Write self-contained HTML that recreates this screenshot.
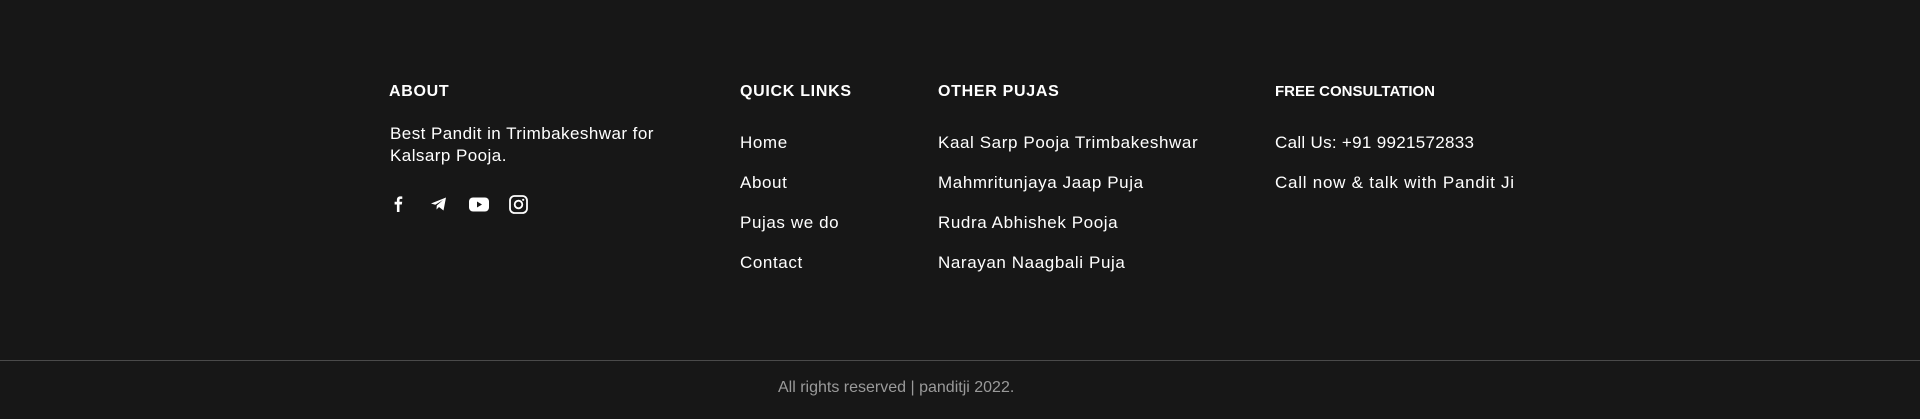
<!DOCTYPE html>
<html><head><style>
body{margin:0;width:1920px;height:419px;background:#171717;font-family:"Liberation Sans",sans-serif;color:#fff;position:relative;overflow:hidden}
.a{position:absolute;white-space:nowrap}
h{position:absolute;font-weight:bold;font-size:16px;letter-spacing:.7px}
.t{position:absolute;font-size:17px;white-space:nowrap;letter-spacing:.6px}
.line{position:absolute;left:0;top:360px;width:1920px;height:1px;background:#4a4a4a}
</style></head><body>
<h style="left:389px;top:83px">ABOUT</h>
<div class="t" style="left:390px;top:123px;line-height:22px;letter-spacing:.45px">Best Pandit in Trimbakeshwar for<br>Kalsarp Pooja.</div>
<svg class="a" style="left:389px;top:194px" width="150" height="20" viewBox="0 0 150 20" fill="#fff">
<path d="M10.5 18V10.5h2.3l.4-2.7h-2.7V6.2c0-.8.3-1.3 1.4-1.3h1.4V2.5c-.3 0-1.1-.1-2-.1-2 0-3.4 1.2-3.4 3.5v1.9H5.6v2.7h2.3V18z"/>
<path d="M42 9.5l15-6-2.5 13-4.5-3.5-2.5 2.5.3-4 6.2-5.5-7.7 4.8z"/>
<rect x="80" y="3.5" width="20" height="14" rx="4"/><path d="M88 7.5v6l5-3z" fill="#171717"/>
<rect x="121" y="2" width="17" height="17" rx="4.5" fill="none" stroke="#fff" stroke-width="1.8"/><circle cx="129.5" cy="10.5" r="3.8" fill="none" stroke="#fff" stroke-width="1.8"/><circle cx="134.2" cy="5.8" r="1.1"/>
</svg>
<h style="left:740px;top:83px">QUICK LINKS</h>
<div class="t" style="left:740px;top:133px">Home</div>
<div class="t" style="left:740px;top:173px">About</div>
<div class="t" style="left:740px;top:213px">Pujas we do</div>
<div class="t" style="left:740px;top:253px">Contact</div>
<h style="left:938px;top:83px">OTHER PUJAS</h>
<div class="t" style="left:938px;top:133px">Kaal Sarp Pooja Trimbakeshwar</div>
<div class="t" style="left:938px;top:173px">Mahmritunjaya Jaap Puja</div>
<div class="t" style="left:938px;top:213px">Rudra Abhishek Pooja</div>
<div class="t" style="left:938px;top:253px">Narayan Naagbali Puja</div>
<h style="left:1275px;top:83px;font-size:15px;letter-spacing:0">FREE CONSULTATION</h>
<div class="t" style="left:1275px;top:133px;letter-spacing:.3px">Call Us: +91 9921572833</div>
<div class="t" style="left:1275px;top:173px;letter-spacing:.75px">Call now &amp; talk with Pandit Ji</div>
<div class="line"></div>
<div class="a" style="left:778px;top:379px;font-size:16px;color:#9a9a9a">All rights reserved | panditji 2022.</div>
</body></html>
